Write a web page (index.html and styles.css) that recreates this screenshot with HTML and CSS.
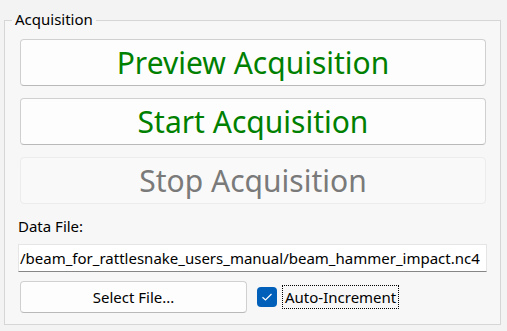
FILE: index.html
```html
<!DOCTYPE html>
<html lang="en">
<head>
    <meta charset="UTF-8">
    <title>Acquisition</title>
    <link rel="stylesheet" href="styles.css">
</head>
<body>
    <fieldset class="group">
        <legend>Acquisition</legend>
        <button class="big-button">Preview Acquisition</button>
        <button class="big-button">Start Acquisition</button>
        <button class="big-button" disabled>Stop Acquisition</button>
        <div class="label">Data File:</div>
        <div class="line-edit"><span>/beam_for_rattlesnake_users_manual/beam_hammer_impact.nc4</span></div>
        <div class="file-row">
            <button class="small-button">Select File...</button>
            <label class="check">
                <span class="check-box">
                    <svg width="12" height="10" viewBox="0 0 12 10"><path d="M1.5 5.2 L4.5 8 L10.5 2" fill="none" stroke="#fff" stroke-width="1.2"/></svg>
                </span>
                <span class="check-text">Auto-Increment</span>
            </label>
        </div>
    </fieldset>
</body>
</html>
```

FILE: styles.css
```css
body {
    margin: 0;
    width: 507px;
    height: 331px;
    background-color: #f3f3f3;
    font-family: "Noto Sans", "Open Sans", sans-serif;
    overflow: hidden;
}
.group {
    margin: 13px 6px 0 4px;
    height: 312px;
    box-sizing: border-box;
    border: 1px solid #d6d6d6;
    border-radius: 0;
    background-color: #f7f7f7;
    padding: 0 13px 0 13px;
    display: flex;
    flex-direction: column;
}
.group legend {
    margin-left: -6px;
    padding: 0 3px;
    font-size: 15px;
    line-height: 15px;
    color: #000;
    position: relative;
    top: -1px;
}
.big-button {
    height: 47px;
    margin: 11px 1px 0 2px;
    border: 1px solid #d0d0d0;
    border-bottom-color: #b9b9b9;
    border-radius: 4px;
    background-color: #fdfdfd;
    color: #008000;
    font-family: "Noto Sans", sans-serif;
    font-size: 30px;
    padding: 0;
}
.big-button + .big-button {
    margin-top: 12px;
}
.big-button:disabled {
    color: #7a7a7a;
    border-color: #ececec;
    background-color: #f9f9f9;
}
.label {
    margin-top: 12px;
    font-size: 15px;
    line-height: 20px;
}
.line-edit {
    margin-top: 8px;
    height: 28px;
    box-sizing: border-box;
    margin-right: 0;
    background-color: #fff;
    border: 1px solid #e5e5e5;
    border-bottom: 1px solid #868686;
    overflow: hidden;
    white-space: nowrap;
    font-size: 15px;
    line-height: 26px;
    padding-left: 1px;
}
.file-row {
    margin-top: 9px;
    display: flex;
    align-items: center;
    gap: 10px;
}
.small-button {
    width: 227px;
    height: 32px;
    margin-left: 2px;
    border: 1px solid #d0d0d0;
    border-bottom-color: #b9b9b9;
    border-radius: 4px;
    background-color: #fdfdfd;
    font-family: "Noto Sans", sans-serif;
    font-size: 15px;
    color: #000;
}
.check {
    display: flex;
    align-items: center;
    gap: 5px;
}
.check-box {
    width: 20px;
    height: 20px;
    border-radius: 4px;
    background-color: #005fb8;
    display: flex;
    align-items: center;
    justify-content: center;
}
.check-text {
    border: 1px dotted #000;
    padding: 0 2px;
    font-size: 15px;
    line-height: 22px;
}
```
